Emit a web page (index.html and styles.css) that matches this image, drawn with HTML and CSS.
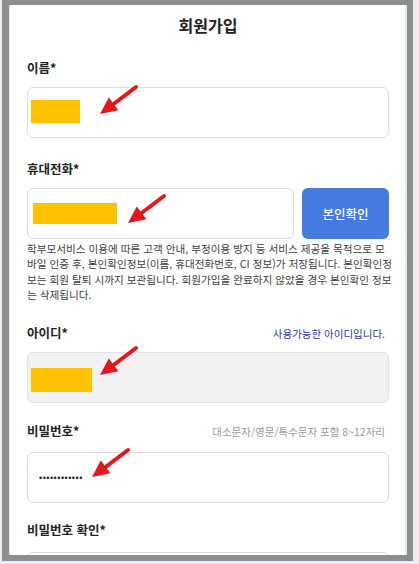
FILE: index.html
```html
<!DOCTYPE html>
<html lang="ko">
<head>
<meta charset="utf-8">
<title>회원가입</title>
<link rel="stylesheet" href="styles.css">
</head>
<body>
<div class="frame">
  <header class="title">회원가입</header>
  <div class="form">
    <div class="field">
      <div class="label-row"><span class="label">이름*</span></div>
      <div class="input">
        <span class="redact r1"></span>
        <svg class="arrow a1" viewBox="0 0 42 34" width="42" height="34"><line x1="14" y1="23" x2="39" y2="4" stroke="#e8141b" stroke-width="4" stroke-linecap="round"/><polygon points="3,31 21.4,27.2 11.8,14.4" fill="#e8141b"/></svg>
      </div>
    </div>

    <div class="field">
      <div class="label-row"><span class="label">휴대전화*</span></div>
      <div class="phone-row">
        <div class="input">
          <span class="redact r2"></span>
          <svg class="arrow a2" viewBox="0 0 42 34" width="42" height="34"><line x1="14" y1="23" x2="39" y2="4" stroke="#e8141b" stroke-width="4" stroke-linecap="round"/><polygon points="3,31 21.4,27.2 11.8,14.4" fill="#e8141b"/></svg>
        </div>
        <button class="btn" type="button">본인확인</button>
      </div>
      <p class="notice">학부모서비스 이용에 따른 고객 안내, 부정이용 방지 등 서비스 제공을 목적으로 모바일 인증 후, 본인확인정보(이름, 휴대전화번호, CI 정보)가 저장됩니다. 본인확인정보는 회원 탈퇴 시까지 보관됩니다. 회원가입을 완료하지 않았을 경우 본인확인 정보는 삭제됩니다.</p>
    </div>

    <div class="field">
      <div class="label-row"><span class="label">아이디*</span><span class="hint-ok">사용가능한 아이디입니다.</span></div>
      <div class="input readonly">
        <span class="redact r3"></span>
        <svg class="arrow a3" viewBox="0 0 42 34" width="42" height="34"><line x1="14" y1="23" x2="39" y2="4" stroke="#e8141b" stroke-width="4" stroke-linecap="round"/><polygon points="3,31 21.4,27.2 11.8,14.4" fill="#e8141b"/></svg>
      </div>
    </div>

    <div class="field field-pw">
      <div class="label-row"><span class="label">비밀번호*</span><span class="hint">대소문자/영문/특수문자 포함 8~12자리</span></div>
      <div class="input">
        <span class="dots">••••••••••••</span>
        <svg class="arrow a4" viewBox="0 0 42 34" width="42" height="34"><line x1="14" y1="23" x2="39" y2="4" stroke="#e8141b" stroke-width="4" stroke-linecap="round"/><polygon points="3,31 21.4,27.2 11.8,14.4" fill="#e8141b"/></svg>
      </div>
    </div>

    <div class="field field-pw2">
      <div class="label-row"><span class="label">비밀번호 확인*</span></div>
      <div class="input"></div>
    </div>
  </div>
</div>
</body>
</html>
```

FILE: styles.css
```css
body {
  margin: 0;
  background: #e9eef4;
  font-family: "Noto Sans CJK KR", "Noto Sans", sans-serif;
}

.frame {
  box-sizing: border-box;
  width: 411px;
  height: 561px;
  margin-left: 2px;
  border-style: solid;
  border-color: #8e8e8e;
  border-width: 5px 6px 6px 7px;
  background: #fff;
  overflow: hidden;
  box-shadow: inset 1px 0 0 #e1e8ef, inset -2px 0 0 #e1e8ef;
}

.title {
  height: 40px;
  line-height: 40px;
  text-align: center;
  font-size: 16px;
  font-weight: 700;
  color: #222;
}

.form {
  padding: 14px 18px 0;
}

.field + .field {
  margin-top: 22px;
}

.field.field-pw {
  margin-top: 19px;
}

.field.field-pw2 {
  margin-top: 18px;
}

.label-row {
  display: flex;
  justify-content: space-between;
  align-items: baseline;
  height: 18px;
  line-height: 18px;
  margin-bottom: 10px;
}

.field-pw .label-row {
  margin-bottom: 12px;
}

.field-pw2 .label-row {
  margin-bottom: 13px;
}

.label {
  font-size: 12.5px;
  font-weight: 700;
  color: #222;
}

.hint-ok {
  font-size: 10.5px;
  color: #2e3a92;
  margin-right: 4px;
}

.hint {
  font-size: 10.5px;
  color: #9a9a9a;
  margin-right: 4px;
}

.input {
  position: relative;
  box-sizing: border-box;
  height: 51px;
  border: 1px solid #dcdcdc;
  border-radius: 6px;
  background: #fff;
}

.input.readonly {
  background: #f2f2f2;
  border-color: #e2e2e2;
}

.phone-row {
  display: flex;
  gap: 8px;
}

.phone-row .input {
  flex: 1;
}

.btn {
  width: 87px;
  height: 51px;
  border: none;
  border-radius: 6px;
  background: #457be0;
  color: #fff;
  font-family: "Noto Sans CJK KR", "Noto Sans", sans-serif;
  font-size: 12.5px;
  font-weight: 500;
}

.notice {
  margin: 2px -5px 0 0;
  font-size: 10.62px;
  line-height: 15.3px;
  color: #3d3d3d;
  word-break: break-all;
}

.redact {
  position: absolute;
  background: #fec200;
}

.r1 { left: 3px; top: 12px; width: 49px; height: 23px; }
.r2 { left: 5px; top: 14px; width: 84px; height: 21px; }
.r3 { left: 3px; top: 15px; width: 61px; height: 24px; }

.arrow {
  position: absolute;
}

.a1 { left: 69px; top: -5px; }
.a2 { left: 97px; top: 3px; }
.a3 { left: 69px; top: -9px; }
.a4 { left: 61px; top: -7px; }

.dots {
  display: block;
  padding-left: 11px;
  line-height: 50px;
  font-family: "Liberation Sans", sans-serif;
  font-size: 9px;
  letter-spacing: 0.5px;
  color: #1e1e1e;
}
```
